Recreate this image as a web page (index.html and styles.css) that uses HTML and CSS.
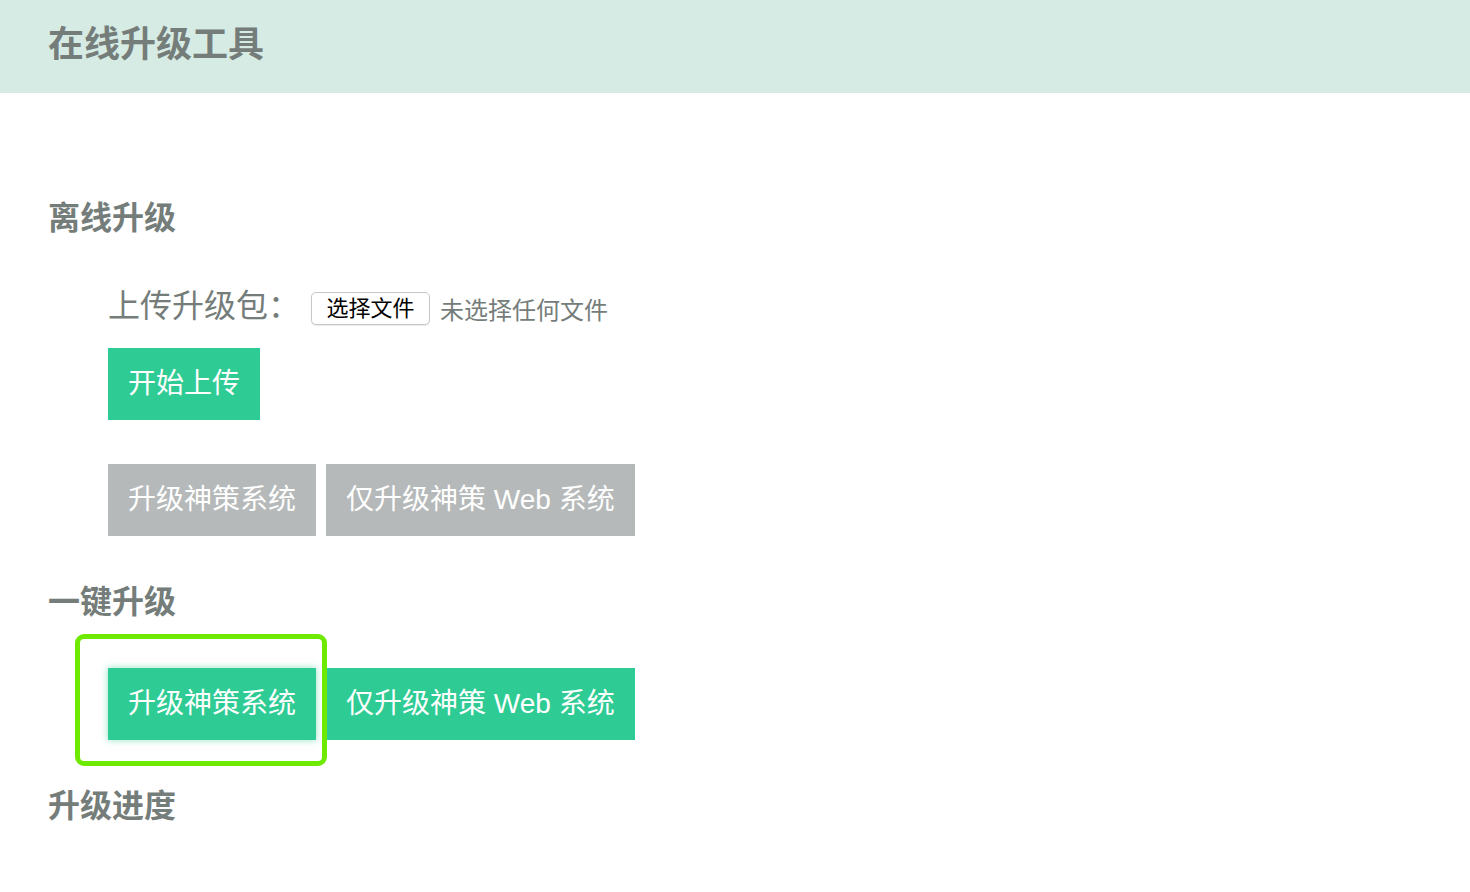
FILE: index.html
```html
<!DOCTYPE html>
<html>

<head>
  <title>在线升级工具</title>
  <link rel="stylesheet" href="styles.css">
</head>

<body>
  <div id="header">
    <h1 id="title">在线升级工具</h1>
  </div>
  <div id="main">
    <h2 class="section-title first">离线升级</h2>
    <div class="section-body">
      <div id="uploadRow">
        <span id="uploadLabel">上传升级包：</span>
        <label class="file-btn" for="fileInput">选择文件</label>
        <input type="file" id="fileInput" />
        <span id="fileName">未选择任何文件</span>
      </div>
      <button class="btn green" id="startUpload">开始上传</button>
      <div class="btn-row">
        <button class="btn gray">升级神策系统</button>
        <button class="btn gray">仅升级神策 Web 系统</button>
      </div>
    </div>

    <h2 class="section-title">一键升级</h2>
    <div class="section-body">
      <div class="btn-row onekey">
        <span class="mark"></span>
        <button class="btn green focused">升级神策系统</button>
        <button class="btn green">仅升级神策 Web 系统</button>
      </div>
    </div>

    <h2 class="section-title">升级进度</h2>
  </div>
</body>

</html>
```

FILE: styles.css
```css
body {
  margin: 0;
  font-family: "Liberation Sans", "Noto Sans CJK SC", sans-serif;
  color: #757d7a;
  background: #fff;
}

#header {
  background-color: #d6ebe4;
  height: 93px;
  padding-left: 48px;
  box-sizing: border-box;
}

#title {
  margin: 0;
  font-size: 36px;
  line-height: 90px;
  font-weight: bold;
}

#main {
  padding: 0 48px;
}

.section-title {
  margin: 46px 0 0;
  font-size: 32px;
  line-height: 40px;
  font-weight: bold;
}

.section-title.first {
  margin-top: 105px;
}

.section-body {
  padding-left: 60px;
}

#uploadRow {
  display: flex;
  align-items: center;
  margin-top: 48px;
  height: 40px;
}

#uploadLabel {
  font-size: 32px;
  line-height: 40px;
}

.file-btn {
  margin-left: 11px;
  margin-top: 4px;
  box-sizing: border-box;
  width: 119px;
  height: 33px;
  border: 1px solid #c6c6c6;
  border-radius: 5px;
  background: #fff;
  color: #000;
  font-size: 22px;
  line-height: 31px;
  text-align: center;
  box-shadow: 0 1px 1px rgba(0, 0, 0, 0.08);
  cursor: pointer;
}

#fileInput {
  display: none;
}

#fileName {
  margin-left: 10px;
  margin-top: 4px;
  font-size: 24px;
}

.btn {
  display: block;
  height: 72px;
  padding: 0 20px;
  border: none;
  font-family: inherit;
  font-size: 28px;
  line-height: 72px;
  color: #fff;
  cursor: pointer;
}

.btn.green {
  background-color: #2ecc94;
}

.btn.gray {
  background-color: #b6b9b9;
}

#startUpload {
  margin-top: 22px;
}

.btn-row {
  display: flex;
  gap: 10px;
  margin-top: 44px;
}

.onekey {
  position: relative;
  margin-top: 46px;
}

.btn.focused {
  box-shadow: 0 0 7px rgba(46, 204, 148, 0.55);
}

.mark {
  position: absolute;
  left: -33px;
  top: -34px;
  width: 252px;
  height: 132px;
  box-sizing: border-box;
  border: 5px solid #6eea00;
  border-radius: 9px;
  z-index: 2;
  pointer-events: none;
}
```
